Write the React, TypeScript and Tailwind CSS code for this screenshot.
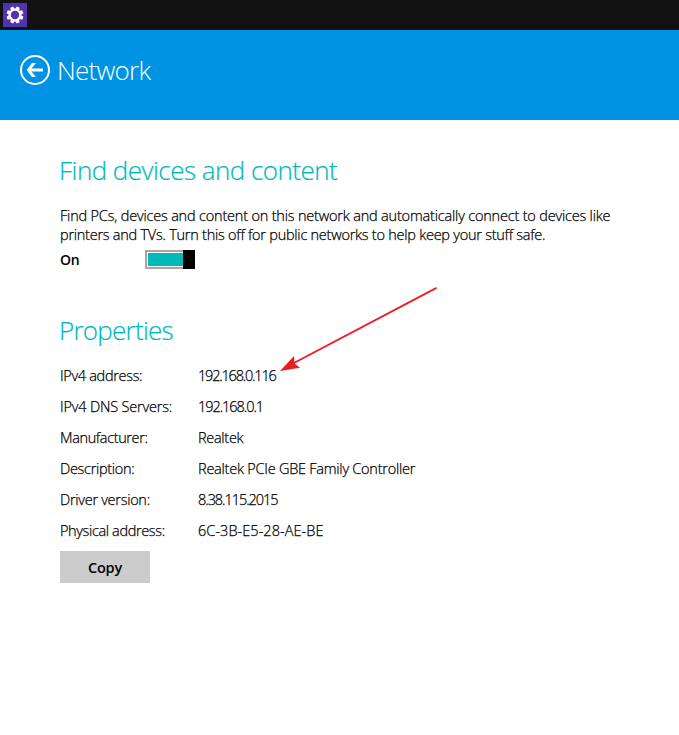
const rows = [
  { label: "IPv4 address:", value: "192.168.0.116", lt: "tracking-[-0.32px]", vt: "tracking-[-1.2px]" },
  { label: "IPv4 DNS Servers:", value: "192.168.0.1", lt: "tracking-[-0.18px]", vt: "tracking-[-1.05px]" },
  { label: "Manufacturer:", value: "Realtek", lt: "tracking-[-0.37px]", vt: "tracking-[-0.3px]" },
  { label: "Description:", value: "Realtek PCIe GBE Family Controller", lt: "tracking-[-0.3px]", vt: "tracking-[-0.24px]" },
  { label: "Driver version:", value: "8.38.115.2015", lt: "tracking-[-0.28px]", vt: "tracking-[-1.05px]" },
  { label: "Physical address:", value: "6C-3B-E5-28-AE-BE", lt: "tracking-[-0.36px]", vt: "tracking-[0.05px]" },
];

function GearIcon() {
  return (
    <svg width="18" height="18" viewBox="-9 -9 18 18" fill="#fff">
      {[22.5, 67.5, 112.5, 157.5, 202.5, 247.5, 292.5, 337.5].map((a) => (
        <path key={a} d="M-2.1 -5.6L-1.5 -8.5H1.5L2.1 -5.6Z" transform={`rotate(${a})`} />
      ))}
      <circle r="5.3" fill="none" stroke="#fff" strokeWidth="2.2" />
    </svg>
  );
}

function BackIcon() {
  return (
    <svg width="30" height="30" viewBox="0 0 30 30" fill="none" stroke="#fff">
      <circle cx="15" cy="15" r="14" strokeWidth="2" />
      <path d="M9 15H23" strokeWidth="3" />
      <path d="M11.9 8H15.9L10.3 15L15.9 22H11.9L6.7 15Z" fill="#fff" stroke="none" />
    </svg>
  );
}

export default function App() {
  return (
    <div className="relative h-[735px] w-[679px] overflow-hidden bg-white font-['Open_Sans','Noto_Sans',sans-serif] text-black">
      <div className="flex h-[30px] bg-[#111111] pl-[3px] pt-[3px]">
        <div className="flex size-6 items-center justify-center bg-[#5133ab]">
          <GearIcon />
        </div>
      </div>
      <header className="flex h-[90px] items-start bg-[#0093e3] pl-5 pt-[25px] text-white">
        <BackIcon />
        <h1 className="ml-[7px] mt-[-3px] whitespace-nowrap text-[26px] font-light leading-9 tracking-[-0.75px]">Network</h1>
      </header>
      <main className="pl-[60px] pt-8">
        <h2 className="ml-[-1px] h-9 whitespace-nowrap text-[26px] font-light leading-9 tracking-[-0.53px] text-[#00b9b9] [-webkit-text-stroke:0.2px]">Find devices and content</h2>
        <div className="mt-[18px] whitespace-nowrap text-[14.5px] font-light leading-[19px] [-webkit-text-stroke:0.25px]">
          <p className="tracking-[-0.19px]">Find PCs, devices and content on this network and automatically connect to devices like</p>
          <p className="tracking-[-0.25px]">printers and TVs. Turn this off for public networks to help keep your stuff safe.</p>
        </div>
        <div className="mt-[6px] flex h-[19px]">
          <span className="w-[85px] text-[14px] font-semibold leading-[19px] tracking-[-0.3px]">On</span>
          <div className="flex h-[19px] w-[50px] justify-end border-2 border-r-0 border-[#a6a6a6] bg-white py-px pl-px">
            <div className="flex-1 bg-[#00b9b9]" />
            <div className="-my-[3px] w-3 bg-black" />
          </div>
        </div>
        <h2 className="ml-[-1px] mt-[43px] h-9 whitespace-nowrap text-[26px] font-light leading-9 tracking-[-0.75px] text-[#00b9b9] [-webkit-text-stroke:0.2px]">Properties</h2>
        <dl className="mt-[12px] text-[14.5px] font-light leading-[31px] [-webkit-text-stroke:0.25px]">
          {rows.map((r) => (
            <div key={r.label} className="flex h-[31px] whitespace-nowrap">
              <dt className={`w-[138px] ${r.lt}`}>{r.label}</dt>
              <dd className={r.vt}>{r.value}</dd>
            </div>
          ))}
        </dl>
        <button className="mt-[5px] block h-8 w-[90px] bg-[#cccccc] pt-px text-[14.5px] font-semibold leading-[31px] tracking-[-0.2px]">Copy</button>
      </main>
      <svg className="absolute left-[270px] top-[280px]" width="180" height="100" viewBox="0 0 180 100">
        <path d="M166.5 7.8L22 84" stroke="#ed1c24" strokeWidth="1.9" />
        <path d="M10 91L24 76L24.5 83.5L30 87.7Z" fill="#ed1c24" />
      </svg>
    </div>
  );
}
